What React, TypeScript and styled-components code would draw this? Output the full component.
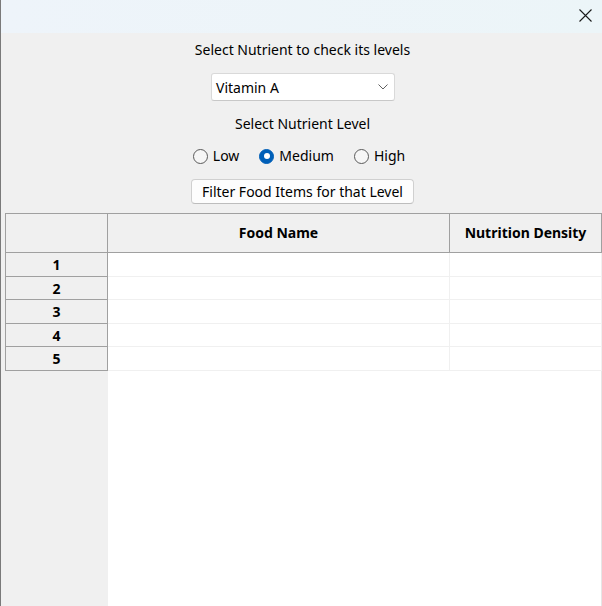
import React from "react";
import styled, { createGlobalStyle } from "styled-components";

const Global = createGlobalStyle`
  html, body { margin: 0; padding: 0; background: #f0f0f0; }
  body { font-family: "Noto Sans", "Segoe UI", sans-serif; color: #000; }
  * { box-sizing: border-box; }
`;

const Window = styled.div`
  width: 602px;
  height: 606px;
  display: flex;
  flex-direction: column;
  border-left: 1px solid #7a7a7a;
  background: #f0f0f0;
  overflow: hidden;
`;

const TitleBar = styled.div`
  height: 33px;
  flex: none;
  display: flex;
  justify-content: flex-end;
  align-items: flex-start;
  background: linear-gradient(90deg, #eef4fa, #ecf5f8);
`;

const CloseButton = styled.div`
  width: 46px;
  height: 33px;
  display: flex;
  align-items: center;
  justify-content: center;
  padding-left: 12px;
  padding-bottom: 2px;
`;

const Content = styled.div`
  flex: 1;
  display: flex;
  flex-direction: column;
  align-items: center;
  min-height: 0;
`;

const Label = styled.div<{ $top: number }>`
  margin-top: ${(p) => p.$top}px;
  margin-left: 2px;
  font-size: 14px;
  line-height: 16px;
  height: 16px;
  white-space: nowrap;
`;

const Select = styled.div`
  margin-top: 15px;
  width: 184px;
  height: 28px;
  margin-left: 3px;
  background: #fff;
  border: 1px solid #d9d9d9;
  border-bottom-color: #c8c8c8;
  border-radius: 3px;
  display: flex;
  align-items: center;
  justify-content: space-between;
  padding: 0 6px 0 4px;
  font-size: 14px;
`;

const RadioRow = styled.div`
  margin-top: 16px;
  height: 16px;
  display: flex;
  align-items: center;
  gap: 20px;
  margin-right: 5px;
`;

const RadioItem = styled.label`
  display: flex;
  align-items: center;
  gap: 5px;
  font-size: 14px;
  line-height: 16px;
`;

const RadioCircle = styled.span<{ $checked?: boolean }>`
  width: 15px;
  height: 15px;
  border-radius: 50%;
  display: inline-flex;
  align-items: center;
  justify-content: center;
  border: 1px solid ${(p) => (p.$checked ? "#005fb8" : "#5a5a5a")};
  background: ${(p) => (p.$checked ? "#005fb8" : "#f6f6f6")};
  &::after {
    content: "";
    width: 6px;
    height: 6px;
    border-radius: 50%;
    background: #fff;
    display: ${(p) => (p.$checked ? "block" : "none")};
  }
`;

const Button = styled.div`
  margin-top: 15px;
  margin-left: 2px;
  width: 223px;
  height: 25px;
  background: #fdfdfd;
  border: 1px solid #d0d0d0;
  border-bottom-color: #bdbdbd;
  border-radius: 4px;
  display: flex;
  align-items: center;
  justify-content: center;
  font-size: 14px;
  white-space: nowrap;
`;

const Table = styled.div`
  margin-top: 9px;
  align-self: stretch;
  margin-left: 4px;
  flex: 1;
  display: grid;
  grid-template-columns: 103px 342px 152px;
  grid-template-rows: 40px 24px 23px 24px 23px 24px 1fr;
`;

const HeaderCell = styled.div<{ $first?: boolean }>`
  background: #f0f0f0;
  border-top: 1px solid #a0a0a0;
  border-bottom: 1px solid #a0a0a0;
  border-right: 1px solid #a0a0a0;
  border-left: ${(p) => (p.$first ? "1px solid #a0a0a0" : "none")};
  display: flex;
  align-items: center;
  justify-content: center;
  padding-bottom: 2px;
  font-weight: 700;
  font-size: 14px;
  white-space: nowrap;
`;

const RowHeader = styled.div`
  background: #f0f0f0;
  border-left: 1px solid #a0a0a0;
  border-right: 1px solid #a0a0a0;
  border-bottom: 1px solid #a0a0a0;
  display: flex;
  align-items: center;
  justify-content: center;
  font-weight: 700;
  font-size: 14px;
`;

const DataCell = styled.div`
  background: #fff;
  border-right: 1px solid #f0f0f0;
  border-bottom: 1px solid #f0f0f0;
`;

const RowHeaderFill = styled.div`
  background: #f0f0f0;
`;

const DataFill = styled.div`
  background: #fff;
  grid-column: span 2;
  border-right: 1px solid #e6e6e6;
`;

const Chevron = () => (
  <svg width="10" height="6" viewBox="0 0 10 6">
    <path d="M0.5 0.5 L5 5 L9.5 0.5" fill="none" stroke="#606060" strokeWidth="1" />
  </svg>
);

const CloseIcon = () => (
  <svg width="13" height="13" viewBox="0 0 13 13">
    <path d="M0.5 0.5 L12.5 12.5 M12.5 0.5 L0.5 12.5" stroke="#1a1a1a" strokeWidth="1.1" />
  </svg>
);

export default function App() {
  const rows = [1, 2, 3, 4, 5];
  return (
    <>
      <Global />
      <Window>
        <TitleBar>
          <CloseButton>
            <CloseIcon />
          </CloseButton>
        </TitleBar>
        <Content>
          <Label $top={9}>Select Nutrient to check its levels</Label>
          <Select>
            <span>Vitamin A</span>
            <Chevron />
          </Select>
          <Label $top={15}>Select Nutrient Level</Label>
          <RadioRow>
            <RadioItem>
              <RadioCircle />
              Low
            </RadioItem>
            <RadioItem>
              <RadioCircle $checked />
              Medium
            </RadioItem>
            <RadioItem>
              <RadioCircle />
              High
            </RadioItem>
          </RadioRow>
          <Button>Filter Food Items for that Level</Button>
          <Table>
            <HeaderCell $first />
            <HeaderCell>Food Name</HeaderCell>
            <HeaderCell>Nutrition Density</HeaderCell>
            {rows.map((r) => (
              <React.Fragment key={r}>
                <RowHeader>{r}</RowHeader>
                <DataCell />
                <DataCell />
              </React.Fragment>
            ))}
            <RowHeaderFill />
            <DataFill />
          </Table>
        </Content>
      </Window>
    </>
  );
}
